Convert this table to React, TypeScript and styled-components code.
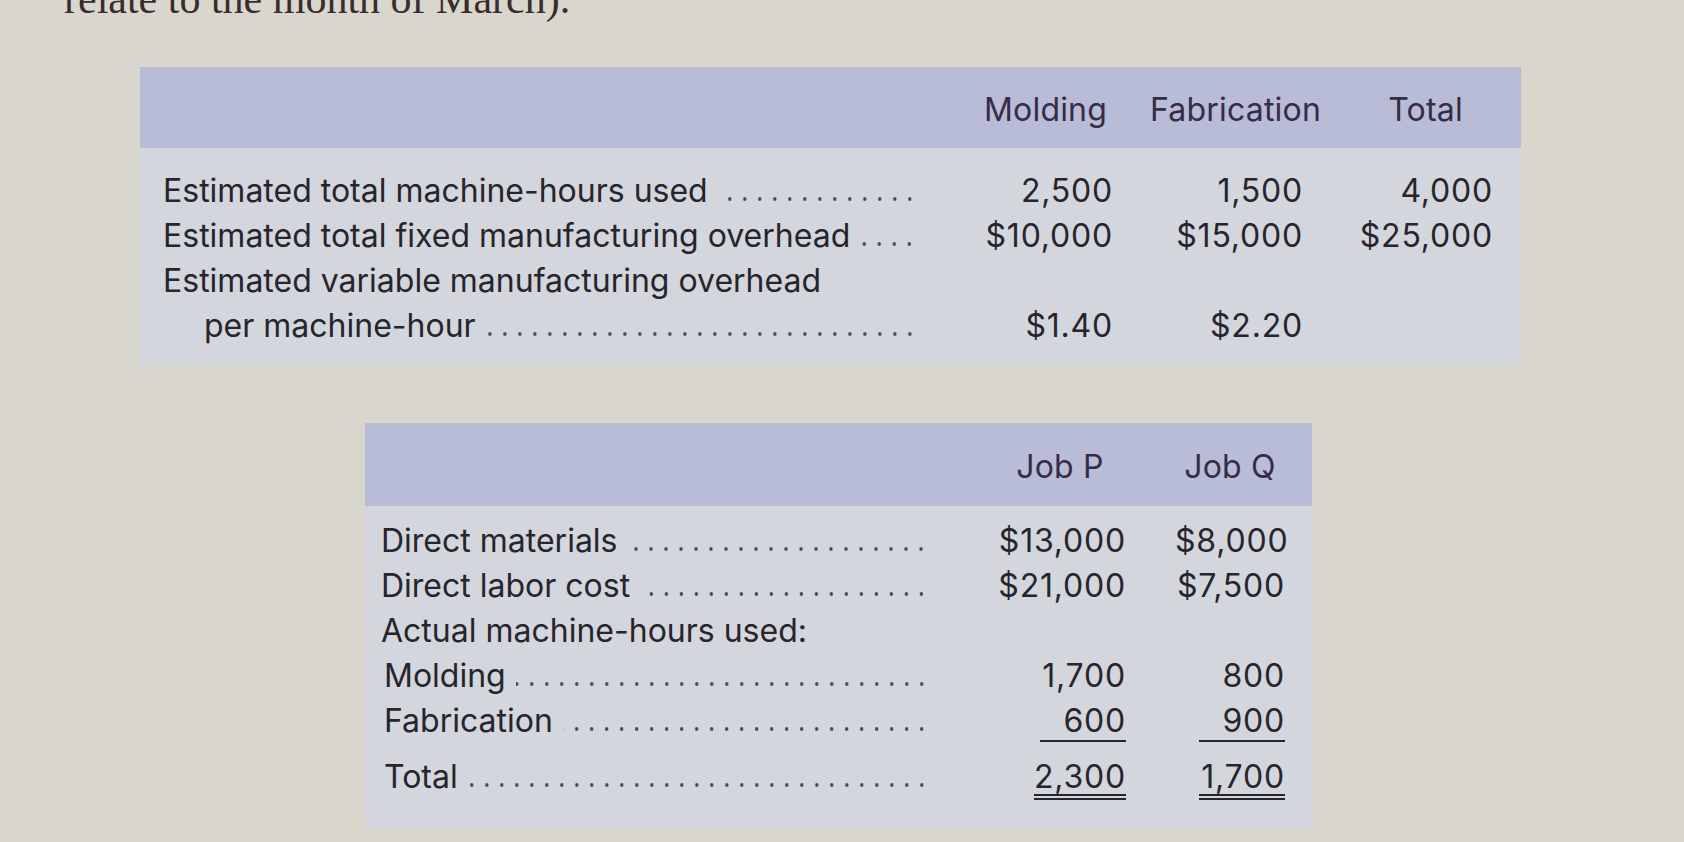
import React from "react";
import styled, { createGlobalStyle } from "styled-components";

const Global = createGlobalStyle`
  html, body { margin: 0; padding: 0; }
  body {
    background: #d9d6ce;
    width: 1684px;
    height: 842px;
    overflow: hidden;
  }
`;

const Page = styled.main`
  display: flex;
  flex-direction: column;
  font-family: Inter, Lato, sans-serif;
  color: #27252c;
`;

const Intro = styled.p`
  margin: -21px 0 0 64px;
  font-family: "Liberation Serif", "Times New Roman", serif;
  font-size: 42px;
  line-height: 40px;
  height: 40px;
  color: #3a2c2c;
  white-space: nowrap;
`;

const Table = styled.section<{ $offset: number; $width: number; $top: number }>`
  margin-left: ${(p) => p.$offset}px;
  margin-top: ${(p) => p.$top}px;
  width: ${(p) => p.$width}px;
  background: #d3d6dc;
`;

const HeaderBand = styled.div<{ $cols: string; $gap: number; $padL: number; $padR: number; $h: number }>`
  display: grid;
  grid-template-columns: ${(p) => p.$cols};
  column-gap: ${(p) => p.$gap}px;
  align-items: center;
  height: ${(p) => p.$h}px;
  padding: 4px ${(p) => p.$padR}px 0 ${(p) => p.$padL}px;
  background: #b8bcd6;
  box-sizing: border-box;
`;

const HeadCell = styled.div`
  display: flex;
  justify-content: center;
  white-space: nowrap;
  font-size: 32px;
  letter-spacing: 0.2px;
  color: #362c46;
`;

const Body = styled.div<{ $padT: number; $padB: number }>`
  padding: ${(p) => p.$padT}px 0 ${(p) => p.$padB}px;
`;

const Row = styled.div<{ $cols: string; $gap: number; $padL: number; $padR: number; $extraTop?: number }>`
  display: grid;
  grid-template-columns: ${(p) => p.$cols};
  column-gap: ${(p) => p.$gap}px;
  align-items: baseline;
  height: 45px;
  line-height: 45px;
  margin-top: ${(p) => p.$extraTop ?? 0}px;
  padding: 0 ${(p) => p.$padR}px 0 ${(p) => p.$padL}px;
  font-size: 32px;
`;

const Label = styled.div<{ $indent?: number; $endPad?: number }>`
  display: flex;
  align-items: baseline;
  white-space: nowrap;
  padding-left: ${(p) => p.$indent ?? 0}px;
  padding-right: ${(p) => p.$endPad ?? 0}px;
  min-width: 0;
`;

const Leader = styled.span`
  flex: 1;
  height: 6px;
  margin-left: 10px;
  background-image: radial-gradient(circle, rgba(50, 48, 58, 0.85) 1.5px, transparent 2.1px);
  background-size: 15px 6px;
  background-repeat: repeat-x;
  background-position: right center;
`;

const Value = styled.div`
  text-align: right;
  white-space: nowrap;
  letter-spacing: 0.8px;
`;

const Figure = styled.span<{ $rule?: "single" | "double" }>`
  display: inline-block;
  min-width: 86px;
  text-align: right;
  line-height: 31px;
  border-bottom: ${(p) =>
    p.$rule === "single" ? "2px solid #27252c" : p.$rule === "double" ? "6px double #27252c" : "none"};
  padding-bottom: ${(p) => (p.$rule === "single" ? "4px" : p.$rule === "double" ? "2px" : "0")};
`;

const t1 = { cols: "1fr 135px 135px 135px", gap: 55, padL: 23, padR: 28 };
const t2 = { cols: "1fr 132px 110px", gap: 49, padL: 16, padR: 27 };

type L = { text: string; leader?: boolean; indent?: number };

function LabelCell({ text, leader, indent, endPad }: L & { endPad?: number }) {
  return (
    <Label $indent={indent} $endPad={endPad}>
      {text}
      {leader && <Leader />}
    </Label>
  );
}

export default function App() {
  const estRows: { label: L; values: string[] }[] = [
    { label: { text: "Estimated total machine-hours used", leader: true }, values: ["2,500", "1,500", "4,000"] },
    { label: { text: "Estimated total fixed manufacturing overhead", leader: true }, values: ["$10,000", "$15,000", "$25,000"] },
    { label: { text: "Estimated variable manufacturing overhead" }, values: ["", "", ""] },
    { label: { text: "per machine-hour", leader: true, indent: 41 }, values: ["$1.40", "$2.20", ""] },
  ];

  const jobRows: { label: L; values: string[]; rule?: "single" | "double"; extra?: number }[] = [
    { label: { text: "Direct materials", leader: true }, values: ["$13,000", "$8,000"] },
    { label: { text: "Direct labor cost", leader: true }, values: ["$21,000", "$7,500"] },
    { label: { text: "Actual machine-hours used:" }, values: ["", ""] },
    { label: { text: "Molding", leader: true, indent: 3 }, values: ["1,700", "800"] },
    { label: { text: "Fabrication", leader: true, indent: 3 }, values: ["600", "900"], rule: "single" },
    { label: { text: "Total", leader: true, indent: 3 }, values: ["2,300", "1,700"], rule: "double", extra: 11 },
  ];

  return (
    <>
      <Global />
      <Page>
        <Intro>relate to the month of March).</Intro>

        <Table $offset={140} $width={1381} $top={48}>
          <HeaderBand $cols={t1.cols} $gap={t1.gap} $padL={t1.padL} $padR={t1.padR} $h={81}>
            <div />
            <HeadCell>Molding</HeadCell>
            <HeadCell>Fabrication</HeadCell>
            <HeadCell>Total</HeadCell>
          </HeaderBand>
          <Body $padT={20} $padB={18}>
            {estRows.map((r, i) => (
              <Row key={i} $cols={t1.cols} $gap={t1.gap} $padL={t1.padL} $padR={t1.padR}>
                <LabelCell {...r.label} endPad={6} />
                {r.values.map((v, j) => (
                  <Value key={j}>{v}</Value>
                ))}
              </Row>
            ))}
          </Body>
        </Table>

        <Table $offset={365} $width={947} $top={57}>
          <HeaderBand $cols={t2.cols} $gap={t2.gap} $padL={t2.padL} $padR={t2.padR} $h={83}>
            <div />
            <HeadCell>Job P</HeadCell>
            <HeadCell>Job Q</HeadCell>
          </HeaderBand>
          <Body $padT={12} $padB={29}>
            {jobRows.map((r, i) => (
              <Row key={i} $cols={t2.cols} $gap={t2.gap} $padL={t2.padL} $padR={t2.padR} $extraTop={r.extra}>
                <LabelCell {...r.label} endPad={16} />
                {r.values.map((v, j) => (
                  <Value key={j}>{v && <Figure $rule={r.rule}>{v}</Figure>}</Value>
                ))}
              </Row>
            ))}
          </Body>
        </Table>
      </Page>
    </>
  );
}
